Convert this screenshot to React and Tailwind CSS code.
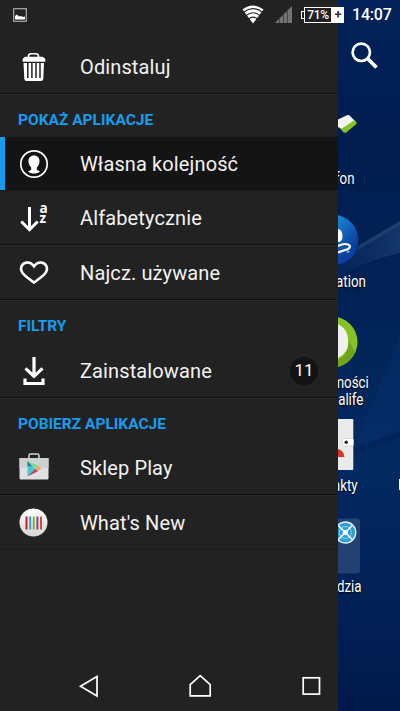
import React from 'react';

const Divider = () => (
  <div className="h-[2px] shrink-0 border-t border-[#111111] bg-[#2b2b2b]" />
);

const SectionTitle = ({ children }) => (
  <div className="flex h-[42px] shrink-0 items-center pl-[18px] pt-[9px] text-[15.5px] font-bold text-[#179ced]">
    <span>{children}</span>
  </div>
);

const MenuRow = ({ icon, label, active, badge }) => (
  <div className={`relative flex h-[53px] shrink-0 items-center ${active ? 'bg-[#141414]' : ''}`}>
    {active && <div className="absolute left-0 top-0 h-full w-[5px] bg-[#179ced]" />}
    <div className="flex w-[67px] shrink-0 justify-center">{icon}</div>
    <span className="ml-[13px] text-[20px] leading-6 tracking-[0.12px] text-[#f2f2f2]">{label}</span>
    {badge && (
      <span className="ml-auto mr-[20px] flex size-7 items-center justify-center rounded-full bg-[#131313] text-[17px] text-white">
        {badge}
      </span>
    )}
  </div>
);

const TrashIcon = () => (
  <svg width="24" height="30" viewBox="0 0 24 30">
    <path d="M6.500 5.500V4Q6.500 1.700 9 1.700h4.500Q16.500 1.700 16.500 4V5.500" fill="none" stroke="#fff" strokeWidth="1.600" />
    <path d="M3 4.800h17.500l2.800 2v2.900H.7V6.800z" fill="#fff" />
    <path d="M1.500 11h20.500l-.7 16q-.2 2-2.200 2H4.500q-2 0-2.200-2z" fill="#fff" />
    <path d="M5.800 11v15M9.900 11v15M14 11v15M18 11v15" stroke="#222" strokeWidth="1.500" />
  </svg>
);

const PersonIcon = () => (
  <svg width="30" height="30" viewBox="0 0 30 30">
    <circle cx="15" cy="15" r="13.200" fill="none" stroke="#fff" strokeWidth="1.700" />
    <path d="M15 6.500c-3.600 0-5.700 2.500-5.500 6 .1 2.500 1.300 4.500 2.700 6v2.200L9 22.600C10.500 24 12.800 24.600 15 24.600s4.500-.6 6-2l-3.200-1.900v-2.200c1.400-1.500 2.600-3.500 2.700-6 .2-3.500-1.900-6-5.500-6z" fill="#fff" />
  </svg>
);

const SortIcon = () => (
  <div className="flex h-[30px] w-[30px]">
    <svg className="shrink-0" width="21" height="30" viewBox="0 0 21 30">
      <path d="M10.500 4v22M2.300 18.500l8.200 8.200 8.200-8.200" fill="none" stroke="#fff" strokeWidth="3" />
    </svg>
    <div className="flex flex-col text-[13.500px] font-bold leading-[10px] text-white font-['Open_Sans',sans-serif]">
      <span>a</span>
      <span>z</span>
    </div>
  </div>
);

const HeartIcon = () => (
  <svg width="30" height="26" viewBox="0 0 30 26">
    <path d="M15 6.300C12.500 2.800 9.500 2.200 7.300 2.600 3 3.300 1 7.800 2.700 11.400 4.300 15.200 10 18.600 15 22.600c5-4 10.700-7.400 12.300-11.200C29 7.800 27 3.300 22.700 2.600 20.500 2.200 17.500 2.800 15 6.300z" fill="none" stroke="#fff" strokeWidth="2.600" />
  </svg>
);

const DownloadIcon = () => (
  <svg width="22" height="30" viewBox="0 0 22 30">
    <path d="M11 1v19M2.500 12.300l8.500 8 8.500-8" fill="none" stroke="#fff" strokeWidth="3.200" />
    <path d="M2 22.500v5h18v-5" fill="none" stroke="#fff" strokeWidth="3.200" />
  </svg>
);

const PlayStoreIcon = () => (
  <svg width="30" height="30" viewBox="0 0 30 30">
    <path d="M10 6V2.500Q10 1 11.500 1h7Q20 1 20 2.500V6" fill="none" stroke="#d4d6d6" strokeWidth="1.500" />
    <path d="M.5 5h29v20q0 1.500-1.500 1.500H2Q.5 26.500.5 25z" fill="#dfe1e1" />
    <path d="M.5 5h29v10H.5z" fill="#cfd1d1" />
    <path d="M8.500 8v15.500l7.500-7.700z" fill="#42cfd3" />
    <path d="M8.500 8v5l5 .5z" fill="#2b78a8" />
    <path d="M8.500 8l10.500 4.700-3 3.100z" fill="#7dd98b" />
    <path d="M19 12.700l3.700 2.800-3.700 2.700-3-2.400z" fill="#f5a66b" />
    <path d="M8.500 23.500l7.500-7.700 3 2.400z" fill="#b3486f" />
  </svg>
);

const WhatsNewIcon = () => (
  <svg width="30" height="30" viewBox="0 0 30 30">
    <defs>
      <linearGradient id="disc" x1="0" y1="0" x2="0" y2="1">
        <stop offset="0" stopColor="#ffffff" />
        <stop offset="1" stopColor="#d5d5d5" />
      </linearGradient>
    </defs>
    <circle cx="14.500" cy="14.500" r="14" fill="url(#disc)" />
    <path d="M7.500 8.500v13" stroke="#c3202f" strokeWidth="2" />
    <path d="M11.200 8.500v13" stroke="#3b9bcb" strokeWidth="2" />
    <path d="M14.800 8.500v13" stroke="#7db72f" strokeWidth="2" />
    <path d="M18.400 8.500v13" stroke="#8b3a9e" strokeWidth="2" />
    <path d="M22 8.500v13" stroke="#dc4a36" strokeWidth="2" />
  </svg>
);

const StatusBar = () => (
  <div className="absolute inset-x-0 top-0 flex h-[29px] items-center">
    <svg className="ml-[13px] shrink-0" width="14" height="14" viewBox="0 0 14 14">
      <rect x="0.700" y="0.700" width="12.600" height="12.600" fill="none" stroke="#aaa" strokeWidth="1.200" />
      <path d="M2 11.500V8l2-1.500 2 2L8 8l2 1 2-.5v3z" fill="#fff" />
    </svg>
    <svg className="ml-[215px] shrink-0" width="22" height="19" viewBox="0 0 22 19">
      <path d="M0.500 4.500Q11-3.500 21.500 4.500L11 18.500z" fill="#fff" />
      <path d="M1.500 7.200Q11 0 20.500 7.200M4 10.600Q11 5 18 10.600M6.500 14Q11 10.200 15.500 14" fill="none" stroke="#222" strokeWidth="1.100" />
    </svg>
    <svg className="ml-[11px] shrink-0" width="17" height="17" viewBox="0 0 17 17">
      <path d="M0 17L17 0v17z" fill="#737373" />
      <path d="M4.500 11v6M8.500 7v10M12.500 3v14" stroke="#383838" strokeWidth="0.800" />
    </svg>
    <div className="ml-[9px] flex h-4 shrink-0 items-center">
      <div className="h-2 w-[3px] border border-r-0 border-white" />
      <div className="flex h-4 w-[28px] items-center justify-center border border-white text-[12px] font-medium leading-none tracking-[-0.4px] text-white">71%</div>
      <div className="flex h-4 w-[12px] items-center justify-center bg-white text-[13px] font-bold leading-none text-[#333]">+</div>
    </div>
    <span className="ml-[8px] text-[16px] font-medium tracking-[-0.2px] text-white">14:07</span>
  </div>
);

const NavBar = () => (
  <div className="absolute inset-x-0 bottom-0 flex h-[50px] items-center justify-between pl-[78px] pr-[78px]">
    <svg width="22" height="24" viewBox="0 0 22 24">
      <path d="M19 2.500v19.500L2.500 12.300z" fill="none" stroke="#fff" strokeWidth="1.700" />
    </svg>
    <svg width="24" height="24" viewBox="0 0 24 24">
      <path d="M1.200 21.800V10.700l10-9 10 9v11.100z" fill="none" stroke="#fff" strokeWidth="1.700" />
    </svg>
    <svg width="20" height="20" viewBox="0 0 20 20">
      <rect x="1.200" y="1.800" width="16.300" height="16.300" fill="none" stroke="#fff" strokeWidth="1.700" />
    </svg>
  </div>
);

const Drawer = () => (
  <div className="flex h-full w-[338px] shrink-0 flex-col bg-[#222222] pt-[40px]">
    <MenuRow icon={<TrashIcon />} label="Odinstaluj" />
    <Divider />
    <SectionTitle>POKAŻ APLIKACJE</SectionTitle>
    <MenuRow icon={<PersonIcon />} label="Własna kolejność" active />
    <div className="h-px shrink-0 bg-[#1b1b1b]" />
    <MenuRow icon={<SortIcon />} label="Alfabetycznie" />
    <Divider />
    <MenuRow icon={<HeartIcon />} label="Najcz. używane" />
    <Divider />
    <SectionTitle>FILTRY</SectionTitle>
    <div className="h-px shrink-0" />
    <MenuRow icon={<DownloadIcon />} label="Zainstalowane" badge="11" />
    <Divider />
    <SectionTitle>POBIERZ APLIKACJE</SectionTitle>
    <MenuRow icon={<PlayStoreIcon />} label="Sklep Play" />
    <Divider />
    <MenuRow icon={<WhatsNewIcon />} label="What's New" />
    <div className="h-px shrink-0 bg-[#1b1b1b]" />
  </div>
);

const Wallpaper = () => (
  <svg className="absolute inset-0" width="62" height="711" viewBox="0 0 62 711">
    <defs>
      <linearGradient id="sky" x1="0" y1="0" x2="0" y2="1">
        <stop offset="0" stopColor="#02225a" />
        <stop offset="0.200" stopColor="#011d50" />
        <stop offset="0.450" stopColor="#022357" />
        <stop offset="0.650" stopColor="#032a62" />
        <stop offset="0.880" stopColor="#021f54" />
        <stop offset="1" stopColor="#00194b" />
      </linearGradient>
      <linearGradient id="beam" x1="0" y1="0" x2="1" y2="0">
        <stop offset="0" stopColor="#0a2a60" stopOpacity="0.500" />
        <stop offset="1" stopColor="#14366a" />
      </linearGradient>
    </defs>
    <rect width="62" height="711" fill="url(#sky)" />
    <path d="M0 258L62 221v32Q30 260 0 276z" fill="url(#beam)" />
    <path d="M20 246L62 221v4L20 250z" fill="#234572" opacity="0.700" />
    <path d="M62 335L15 450l47-18z" fill="#06306b" opacity="0.500" />
    <path d="M15 448L62 431v6L15 456z" fill="#011f52" opacity="0.400" />
  </svg>
);

const AppLabel = ({ children }) => (
  <span className="inline-block origin-right scale-x-[0.83] whitespace-nowrap text-[16px] leading-[17px] text-white [text-shadow:0_1px_2px_#000]">
    {children}
  </span>
);

const AppTile = ({ art, width, lines }) => (
  <div className="flex shrink-0 flex-col">
    {art}
    <div className={`flex flex-col ${width}`}>
      {lines.map(([text, inset]) => (
        <div key={text} className={`flex justify-end ${inset}`}>
          <AppLabel>{text}</AppLabel>
        </div>
      ))}
    </div>
  </div>
);

const PhoneArt = () => (
  <svg width="62" height="60" viewBox="0 0 62 60">
    <path d="M0 9.500L8.500 5.500q2-1 3.300.2L17 11 4.500 19.700 0 17z" fill="#f4f4f2" />
    <path d="M1.500 17.500l2.500 1L16.200 10.200q3 1.600 2.300 3.800L8.500 22.300q-2 1.200-3.500-.3z" fill="#85c226" />
  </svg>
);

const PlayStationArt = () => (
  <svg width="62" height="62" viewBox="0 0 62 62">
    <defs>
      <linearGradient id="ps" x1="0.400" y1="0" x2="1" y2="0.500">
        <stop offset="0" stopColor="#1b9be0" />
        <stop offset="1" stopColor="#0b3fa0" />
      </linearGradient>
    </defs>
    <circle cx="-5" cy="29" r="25.300" fill="url(#ps)" />
    <path d="M0 18q4.500 1 4.500 7T0 31z" fill="#fff" />
    <path d="M0 35q6-3 10-1.500t0 4.500L0 41.500" fill="none" stroke="#fff" strokeWidth="2.200" />
    <circle cx="10" cy="40.500" r="1.500" fill="#58a9dc" />
  </svg>
);

const LifeArt = () => (
  <svg width="62" height="61" viewBox="0 0 62 61">
    <circle cx="-6" cy="29" r="25.500" fill="#87c225" />
    <path d="M0 47q12-6 10-21l7 13Q12 51 0 54z" fill="#6fa41c" />
    <path d="M0 11q10 5 10.300 17T0 45z" fill="#f0f0f0" />
  </svg>
);

const ContactsArt = () => (
  <svg width="62" height="61" viewBox="0 0 62 61">
    <rect x="-30" y="3" width="45.300" height="51" rx="1" fill="#e9eaea" />
    <path d="M0 33q5.500 1 6.500 8H0z" fill="#d9341f" />
    <rect x="4.500" y="22.500" width="11" height="7.500" rx="1.500" fill="#fff" stroke="#bbb" strokeWidth="0.500" />
    <circle cx="8.200" cy="26.300" r="1.700" fill="#222" />
  </svg>
);

const FolderArt = () => (
  <svg width="62" height="61" viewBox="0 0 62 61">
    <rect x="-30" y="1.500" width="52" height="55" rx="3" fill="#6f86ad" opacity="0.300" />
    <circle cx="7.300" cy="15.500" r="10.500" fill="#2f9fd6" stroke="#e8f3fa" strokeWidth="1.300" />
    <circle cx="7.300" cy="15.500" r="6" fill="none" stroke="#8fd0ef" strokeWidth="1" />
    <path d="M0.300 8.500l14 14M14.300 8.500l-14 14" stroke="#fff" strokeWidth="1.500" />
    <rect x="4.800" y="13" width="5" height="5" rx="1" fill="#fff" />
  </svg>
);

const HomeScreen = () => (
  <div className="relative h-full flex-1 overflow-hidden">
    <Wallpaper />
    <div className="relative flex h-full flex-col pt-[41px]">
      <svg className="ml-[12px] shrink-0" width="30" height="30" viewBox="0 0 30 30">
        <circle cx="11.300" cy="11.300" r="8.700" fill="none" stroke="#fff" strokeWidth="2.700" />
        <path d="M17.800 17.800l8.700 8.700" stroke="#fff" strokeWidth="3.700" />
      </svg>
      <div className="flex flex-col pt-[39px]">
        <AppTile art={<PhoneArt />} width="w-[17px]" lines={[['fon', '']]} />
        <div className="h-[24px]" />
        <AppTile art={<PlayStationArt />} width="w-[28px]" lines={[['ation', '']]} />
        <div className="h-[23px]" />
        <AppTile art={<LifeArt />} width="w-[31px]" lines={[['mości', ''], ['alife', 'pr-[6px]']]} />
        <div className="h-[8px]" />
        <div className="relative">
          <AppTile art={<ContactsArt />} width="w-[20px]" lines={[['akty', '']]} />
          <div className="absolute bottom-[4px] right-0 h-[11px] w-px bg-white" />
        </div>
        <div className="h-[23px]" />
        <AppTile art={<FolderArt />} width="w-[24px]" lines={[['dzia', '']]} />
      </div>
    </div>
  </div>
);

function App() {
  return (
    <div className="relative flex h-[711px] w-[400px] overflow-hidden font-['Roboto',sans-serif]">
      <Drawer />
      <HomeScreen />
      <StatusBar />
      <NavBar />
    </div>
  );
}

export default App;
